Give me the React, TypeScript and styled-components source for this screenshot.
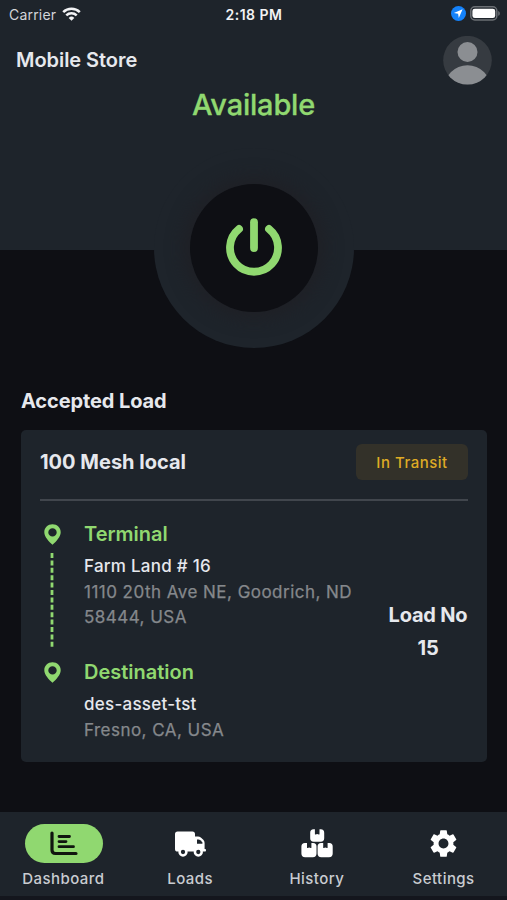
import React from "react";
import styled, { createGlobalStyle } from "styled-components";
import { MdSettings } from "react-icons/md";

const GREEN = "#90d870";
const PANEL = "#1e242b";
const NIGHT = "#0e0f14";

const GlobalStyle = createGlobalStyle`
  * { box-sizing: border-box; }
  body { margin: 0; background: ${NIGHT}; }
`;

const Screen = styled.main`
  width: 507px;
  height: 900px;
  display: flex;
  flex-direction: column;
  overflow: hidden;
  background: ${NIGHT};
  color: #e6e8ed;
  font-family: Inter, "Liberation Sans", sans-serif;
`;

const Hero = styled.section`
  position: relative;
  flex: none;
  height: 250px;
  background: ${PANEL};
`;

const StatusBar = styled.div`
  height: 28px;
  padding: 0 7px 0 9px;
  display: grid;
  grid-template-columns: 1fr auto 1fr;
  align-items: center;
`;

const Carrier = styled.span`
  display: flex;
  align-items: center;
  gap: 6px;
  font-size: 14px;
  letter-spacing: 0.2px;
  color: #d3d5d9;
`;

const Clock = styled.span`
  padding-right: 1px;
  font-size: 14px;
  font-weight: 600;
  letter-spacing: 0.5px;
  color: #f2f3f5;
`;

const StatusIcons = styled.span`
  display: flex;
  justify-content: flex-end;
  align-items: center;
  gap: 4px;
  padding-bottom: 1px;
`;

const Header = styled.header`
  height: 64px;
  padding: 0 15px 0 16px;
  display: flex;
  align-items: center;
  justify-content: space-between;
`;

const StoreName = styled.h1`
  margin: 0;
  font-size: 20px;
  line-height: 24px;
  font-weight: 600;
  letter-spacing: -0.05px;
`;

const Availability = styled.div`
  margin-top: -6px;
  text-align: center;
  font-size: 29px;
  line-height: 38px;
  font-weight: 500;
  letter-spacing: -0.2px;
  color: ${GREEN};
  -webkit-text-stroke: 0.3px ${GREEN};
`;

const Dial = styled.div`
  position: absolute;
  left: 154px;
  top: 148px;
  width: 200px;
  height: 200px;
  border-radius: 50%;
  display: grid;
  place-items: center;
  background: ${PANEL};
`;

const PowerButton = styled.button`
  width: 128px;
  height: 128px;
  padding: 0;
  border: 0;
  border-radius: 50%;
  display: grid;
  place-items: center;
  background: ${NIGHT};
  box-shadow: 0 0 16px 8px rgba(31, 32, 38, 0.9);
`;

const Content = styled.section`
  flex: 1;
  padding: 139px 20px 0 21px;
`;

const SectionTitle = styled.h2`
  margin: 0 0 16px;
  font-size: 20px;
  line-height: 25px;
  font-weight: 700;
  letter-spacing: -0.1px;
`;

const Card = styled.article`
  height: 332px;
  padding: 14px 19px 0;
  border-radius: 5px;
  background: ${PANEL};
`;

const CardHeader = styled.div`
  height: 57px;
  display: flex;
  align-items: flex-start;
  justify-content: space-between;
  border-bottom: 2px solid #41464d;
`;

const LoadName = styled.h3`
  margin: 0;
  font-size: 20px;
  line-height: 36px;
  font-weight: 700;
`;

const StatusTag = styled.span`
  width: 112px;
  height: 36px;
  border-radius: 6px;
  display: grid;
  place-items: center;
  background: #333129;
  color: #dfab25;
  font-size: 15px;
  font-weight: 500;
  letter-spacing: 0.5px;
`;

const CardBody = styled.div`
  display: grid;
  grid-template-columns: 24px 1fr 80px;
  padding-top: 20px;
`;

const Route = styled.div`
  display: flex;
  flex-direction: column;
  align-items: center;
  padding-top: 3px;
`;

const DashGap = styled.div`
  height: 117px;
  padding-top: 8px;
`;

const Stops = styled.div`
  padding-left: 20px;
`;

const Stop = styled.div`
  height: 138px;
`;

const StopKind = styled.h4`
  margin: 0;
  font-size: 20px;
  line-height: 26px;
  font-weight: 600;
  color: ${GREEN};
`;

const StopName = styled.p`
  margin: 6px 0 1px;
  font-size: 17px;
  line-height: 26px;
  font-weight: 500;
  letter-spacing: 0.25px;
`;

const Address = styled.p`
  margin: 0;
  width: 285px;
  font-size: 17px;
  line-height: 24.5px;
  letter-spacing: 0.47px;
  color: #85888c;
  -webkit-text-stroke: 0.25px #85888c;
`;

const LoadNumber = styled.div`
  padding-top: 78px;
  text-align: center;
  white-space: nowrap;
  font-size: 20px;
  line-height: 33px;
  font-weight: 700;
  letter-spacing: -0.2px;
`;

const TabBar = styled.nav`
  flex: none;
  height: 88px;
  padding-top: 12px;
  display: grid;
  grid-template-columns: repeat(4, 1fr);
  background: ${PANEL};
  border-bottom: 4px solid #14161d;
`;

const Tab = styled.a`
  display: flex;
  flex-direction: column;
  align-items: center;
  gap: 6px;
  font-size: 15px;
  line-height: 20px;
  font-weight: 500;
  letter-spacing: 0.45px;
  color: #c9ccd1;
`;

const TabIcon = styled.span<{ $active?: boolean }>`
  width: 78px;
  height: 39px;
  margin-left: ${(p) => (p.$active ? "1px" : "0")};
  border-radius: 20px;
  display: grid;
  place-items: center;
  color: ${(p) => (p.$active ? "#10150f" : "#fff")};
  background: ${(p) => (p.$active ? GREEN : "transparent")};
`;

const Wifi = () => (
  <svg width="19" height="15" viewBox="0 0 19 15" fill="none" stroke="#f2f3f5" strokeWidth="2.5">
    <path d="M1.2 5.2a11.8 11.8 0 0 1 16.6 0" />
    <path d="M4.3 8.4a7.4 7.4 0 0 1 10.4 0" />
    <path d="M9.5 13.7 6.7 10.9a4 4 0 0 1 5.6 0Z" fill="#f2f3f5" stroke="none" />
  </svg>
);

const LocationArrow = () => (
  <svg width="15" height="15" viewBox="0 0 15 15">
    <circle cx="7.5" cy="7.5" r="7.5" fill="#1482fa" />
    <path d="M11.6 3.3 2.9 7.1l4.2.7.7 4.3Z" fill="#fff" />
  </svg>
);

const Battery = () => (
  <svg width="30" height="15" viewBox="0 0 30 15">
    <rect x=".8" y=".8" width="26" height="13.2" rx="4" fill="none" stroke="#6b6f74" strokeWidth="1.5" />
    <rect x="2.4" y="2.7" width="22.8" height="9.4" rx="2.4" fill="#fff" />
    <path d="M28.200 5c2.2.8 2.2 4 0 4.800Z" fill="#6b6f74" />
  </svg>
);

const Avatar = () => (
  <svg width="49" height="49" viewBox="0 0 49 49">
    <clipPath id="avatar-disc">
      <circle cx="24.5" cy="24.2" r="24.3" />
    </clipPath>
    <g clipPath="url(#avatar-disc)">
      <rect width="49" height="49" fill="#363b41" />
      <circle cx="24.5" cy="16" r="10" fill="#8b8e92" />
      <circle cx="24.5" cy="52.5" r="23.3" fill="#8b8e92" />
    </g>
  </svg>
);

const PowerIcon = () => (
  <svg width="64" height="64" viewBox="-32 -32 64 64" fill="none" stroke={GREEN} strokeWidth="7.8" strokeLinecap="round">
    <path d="M-15 -19A24 24 0 1 0 15 -19" />
    <path d="M0 -25.800V0" />
  </svg>
);

const PinShape = styled.svg`
  display: block;
`;

const Pin = () => (
  <PinShape width="17" height="21" viewBox="0 0 17 21">
    <path
      fill={GREEN}
      fillRule="evenodd"
      d="M8.5.2C3.9.2.3 3.7.3 8.2.3 13 5 17.5 8.5 20.8 12 17.5 16.7 13 16.7 8.2 16.7 3.7 13.1.2 8.5.2ZM8.5 4.200A4.200 4.200 0 1 1 8.500 12.600 4.200 4.200 0 0 1 8.500 4.200Z"
    />
  </PinShape>
);

const DashedLine = () => (
  <svg width="4" height="94" viewBox="0 0 4 94">
    <path d="M2 0V94" stroke={GREEN} strokeWidth="2.8" strokeDasharray="5 2.4" />
  </svg>
);

const ChartIcon = () => (
  <svg width="28" height="26" viewBox="0 0 28 26" fill="none" stroke="currentColor" strokeWidth="3.2" strokeLinecap="round">
    <path d="M2 2V19Q2 22.5 5.5 22.5H26" strokeLinejoin="round" />
    <path d="M9 5.5H19.5M9 10.6H16M9 15.7H23.5" strokeWidth="2.8" />
  </svg>
);

const TruckIcon = () => (
  <svg width="31" height="26" viewBox="0 0 31 26" fill="currentColor">
    <path d="M2.6.5H17.4Q20 .5 20 3.1V5.5H23Q24.6 5.5 25.8 6.5L28.3 8.8Q29.6 10.1 29.6 12V18H30.2Q31 18 31 19.2T30.2 20.6H2.6Q0 20.6 0 18V3.1Q0 .5 2.6.5Z" />
    <path d="M22 8.5H23.5Q24.5 8.5 25.3 9.2L27.4 11.2V12.8H22Z" fill={PANEL} />
    <g stroke="currentColor" strokeWidth="2.5" fill={PANEL}>
      <circle cx="8" cy="21" r="3.4" />
      <circle cx="23.3" cy="21" r="3.4" />
    </g>
  </svg>
);

const BoxesIcon = () => (
  <svg width="32" height="29" viewBox="0 0 32 29" fill="currentColor">
    <path d="M9.2 3.7Q9.2.2 12.5.2H13.9V5Q13.9 5.7 14.6 5.5L16.2 5 17.8 5.5Q18.5 5.7 18.5 5V.2H19.8Q23.2.2 23.2 3.7V9.3Q23.2 12.7 19.8 12.7H12.6Q9.2 12.7 9.2 9.3Z" />
    <path id="crate" d="M.4 17.5Q.4 14 3.9 14H6V18.5Q6 19.2 6.7 19L8.2 18.5 9.7 19Q10.4 19.2 10.4 18.5V14H12.1Q15.500 14 15.500 17.500V24.500Q15.500 28.200 11.800 28.200H4.100Q.4 28.200.4 24.500Z" />
    <use href="#crate" x="16.2" />
  </svg>
);

const TABS = [
  { label: "Dashboard", icon: <ChartIcon />, active: true },
  { label: "Loads", icon: <TruckIcon /> },
  { label: "History", icon: <BoxesIcon /> },
  { label: "Settings", icon: <MdSettings size={33} /> },
];

const STOPS = [
  { kind: "Terminal", name: "Farm Land # 16", address: "1110 20th Ave NE, Goodrich, ND 58444, USA" },
  { kind: "Destination", name: "des-asset-tst", address: "Fresno, CA, USA" },
];

export default function App() {
  return (
    <Screen>
      <GlobalStyle />
      <Hero>
        <StatusBar>
          <Carrier>Carrier <Wifi /></Carrier>
          <Clock>2:18 PM</Clock>
          <StatusIcons><LocationArrow /><Battery /></StatusIcons>
        </StatusBar>
        <Header>
          <StoreName>Mobile Store</StoreName>
          <Avatar />
        </Header>
        <Availability>Available</Availability>
        <Dial>
          <PowerButton aria-label="Toggle availability"><PowerIcon /></PowerButton>
        </Dial>
      </Hero>
      <Content>
        <SectionTitle>Accepted Load</SectionTitle>
        <Card>
          <CardHeader>
            <LoadName>100 Mesh local</LoadName>
            <StatusTag>In Transit</StatusTag>
          </CardHeader>
          <CardBody>
            <Route>
              <Pin />
              <DashGap><DashedLine /></DashGap>
              <Pin />
            </Route>
            <Stops>
              {STOPS.map((s) => (
                <Stop key={s.kind}>
                  <StopKind>{s.kind}</StopKind>
                  <StopName>{s.name}</StopName>
                  <Address>{s.address}</Address>
                </Stop>
              ))}
            </Stops>
            <LoadNumber>
              <div>Load No</div>
              <div>15</div>
            </LoadNumber>
          </CardBody>
        </Card>
      </Content>
      <TabBar>
        {TABS.map((t) => (
          <Tab key={t.label}>
            <TabIcon $active={t.active}>{t.icon}</TabIcon>
            {t.label}
          </Tab>
        ))}
      </TabBar>
    </Screen>
  );
}
